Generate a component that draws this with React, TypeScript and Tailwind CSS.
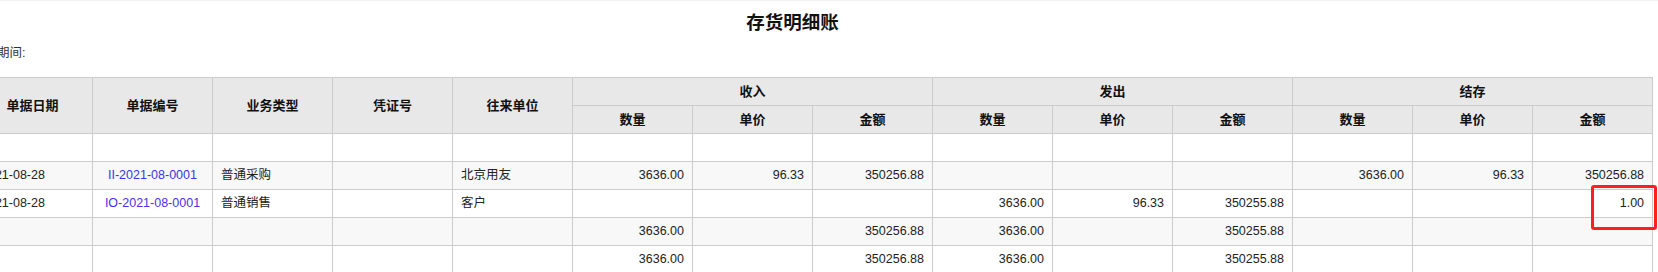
import React from "react";

type Cell = { v?: string; align?: "l" | "c" | "r"; link?: string };

const font = "font-['Liberation_Sans','Noto_Sans_CJK_SC',sans-serif]";

const blank = (n: number): Cell[] => Array.from({ length: n }, () => ({}));

const rows: Cell[][] = [
  blank(14),
  [
    { v: "2021-08-28", align: "l" },
    { v: "II-2021-08-0001", align: "c", link: "text-[#3535f0]" },
    { v: "普通采购", align: "l" },
    {},
    { v: "北京用友", align: "l" },
    { v: "3636.00", align: "r" },
    { v: "96.33", align: "r" },
    { v: "350256.88", align: "r" },
    {},
    {},
    {},
    { v: "3636.00", align: "r" },
    { v: "96.33", align: "r" },
    { v: "350256.88", align: "r" },
  ],
  [
    { v: "2021-08-28", align: "l" },
    { v: "IO-2021-08-0001", align: "c", link: "text-[#4a33e6]" },
    { v: "普通销售", align: "l" },
    {},
    { v: "客户", align: "l" },
    {},
    {},
    {},
    { v: "3636.00", align: "r" },
    { v: "96.33", align: "r" },
    { v: "350255.88", align: "r" },
    {},
    {},
    { v: "1.00", align: "r" },
  ],
  [
    ...blank(5),
    { v: "3636.00", align: "r" },
    {},
    { v: "350256.88", align: "r" },
    { v: "3636.00", align: "r" },
    {},
    { v: "350255.88", align: "r" },
    ...blank(3),
  ],
  [
    ...blank(5),
    { v: "3636.00", align: "r" },
    {},
    { v: "350256.88", align: "r" },
    { v: "3636.00", align: "r" },
    {},
    { v: "350255.88", align: "r" },
    ...blank(3),
  ],
];

const alignClass = {
  l: "text-left",
  c: "text-center",
  r: "text-right",
};

export default function App() {
  const th = "border border-[#cccccc] bg-[#e8e8e8] font-bold text-[13px] text-[#111] text-center p-0";

  return (
    <div className={`relative w-[1658px] h-[272px] overflow-hidden bg-white border-t border-[#f2f2f2] ${font}`}>
      <div className="-ml-[28px] w-[1686px]">
        {/* 标题 */}
        <div className="mt-[9px] w-[1641px] h-[26px] leading-[26px] text-center text-[18.5px] font-bold text-[#111]">
          存货明细账
        </div>
        <div className="mt-[8px] pl-[25px] h-[18px] leading-[18px] text-[12.5px] text-[#333]">期间:</div>

        {/* --- 明细表 --- */}
        <table className="mt-[15px] w-[1680px] table-fixed border-collapse text-[12.5px] text-[#222]">
          <colgroup>
            {Array.from({ length: 14 }, (_, i) => (
              <col key={i} className="w-[120px]" />
            ))}
          </colgroup>
          <thead>
            <tr className="h-[28px]">
              <th rowSpan={2} className={th}>单据日期</th>
              <th rowSpan={2} className={th}>单据编号</th>
              <th rowSpan={2} className={th}>业务类型</th>
              <th rowSpan={2} className={th}>凭证号</th>
              <th rowSpan={2} className={th}>往来单位</th>
              <th colSpan={3} className={th}>收入</th>
              <th colSpan={3} className={th}>发出</th>
              <th colSpan={3} className={th}>结存</th>
            </tr>
            <tr className="h-[28px]">
              {["数量", "单价", "金额", "数量", "单价", "金额", "数量", "单价", "金额"].map((t, i) => (
                <th key={i} className={th}>{t}</th>
              ))}
            </tr>
          </thead>
          <tbody>
            {rows.map((row, ri) => (
              <tr key={ri} className={`h-[28px] ${ri % 2 === 1 ? "bg-[#f8f8f8]" : "bg-white"}`}>
                {row.map((c, ci) => (
                  <td
                    key={ci}
                    className={`border border-[#cccccc] px-[8px] py-0 whitespace-nowrap ${alignClass[c.align ?? "l"]} ${c.link ?? ""}`}
                  >
                    {c.v ?? ""}
                  </td>
                ))}
              </tr>
            ))}
          </tbody>
        </table>
      </div>

      {/* 标注框 */}
      <div className="absolute left-[1591px] top-[184px] w-[66px] h-[45px] border-[3px] border-[#ff1f1f] rounded-[3px]" />
    </div>
  );
}
